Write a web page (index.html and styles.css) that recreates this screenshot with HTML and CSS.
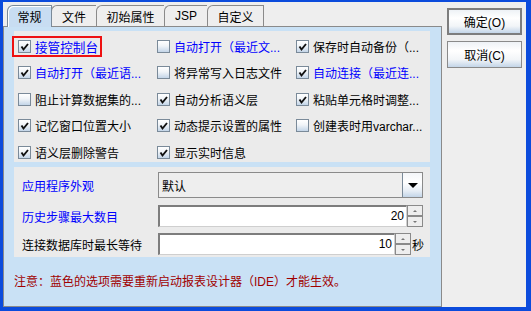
FILE: index.html
```html
<!DOCTYPE html>
<html lang="zh">

<head>
    <meta charset="utf-8">
    <title>选项</title>
    <link rel="stylesheet" href="styles.css">
</head>

<body>
    <div class="window">
        <div class="tabpane">
            <div class="tabs">
                <div class="tab active t1">常规</div>
                <div class="tab t2">文件</div>
                <div class="tab t3">初始属性</div>
                <div class="tab t4">JSP</div>
                <div class="tab t5">自定义</div>
            </div>

            <div class="panel">
                <div class="options">
                    <div class="opt hl"><span class="cb"><svg viewBox="0 0 11 11"><path d="M2.5 5.5 L4.5 8.5 L9 3" /></svg></span><span class="blue big">接管控制台</span></div>
                    <div class="opt"><span class="cb"></span><span class="blue">自动打开（最近文...</span></div>
                    <div class="opt"><span class="cb"><svg viewBox="0 0 11 11"><path d="M2.5 5.5 L4.5 8.5 L9 3" /></svg></span><span>保存时自动备份（...</span></div>

                    <div class="opt"><span class="cb"><svg viewBox="0 0 11 11"><path d="M2.5 5.5 L4.5 8.5 L9 3" /></svg></span><span class="blue">自动打开（最近语...</span></div>
                    <div class="opt"><span class="cb"></span><span>将异常写入日志文件</span></div>
                    <div class="opt"><span class="cb"><svg viewBox="0 0 11 11"><path d="M2.5 5.5 L4.5 8.5 L9 3" /></svg></span><span class="blue">自动连接（最近连...</span></div>

                    <div class="opt"><span class="cb"></span><span>阻止计算数据集的...</span></div>
                    <div class="opt"><span class="cb"><svg viewBox="0 0 11 11"><path d="M2.5 5.5 L4.5 8.5 L9 3" /></svg></span><span>自动分析语义层</span></div>
                    <div class="opt"><span class="cb"><svg viewBox="0 0 11 11"><path d="M2.5 5.5 L4.5 8.5 L9 3" /></svg></span><span>粘贴单元格时调整...</span></div>

                    <div class="opt"><span class="cb"><svg viewBox="0 0 11 11"><path d="M2.5 5.5 L4.5 8.5 L9 3" /></svg></span><span>记忆窗口位置大小</span></div>
                    <div class="opt"><span class="cb"><svg viewBox="0 0 11 11"><path d="M2.5 5.5 L4.5 8.5 L9 3" /></svg></span><span>动态提示设置的属性</span></div>
                    <div class="opt"><span class="cb"></span><span>创建表时用varchar...</span></div>

                    <div class="opt"><span class="cb"><svg viewBox="0 0 11 11"><path d="M2.5 5.5 L4.5 8.5 L9 3" /></svg></span><span>语义层删除警告</span></div>
                    <div class="opt"><span class="cb"><svg viewBox="0 0 11 11"><path d="M2.5 5.5 L4.5 8.5 L9 3" /></svg></span><span>显示实时信息</span></div>
                </div>

                <div class="settings">
                    <div class="row r1">
                        <span class="lbl blue">应用程序外观</span>
                        <div class="combo">
                            <span class="combo_val">默认</span>
                            <span class="combo_btn"><i></i></span>
                        </div>
                    </div>
                    <div class="row r2">
                        <span class="lbl blue">历史步骤最大数目</span>
                        <div class="field">20</div>
                        <div class="spin"><span class="up"><i></i></span><span class="down"><i></i></span></div>
                    </div>
                    <div class="row r3">
                        <span class="lbl">连接数据库时最长等待</span>
                        <div class="field short">10</div>
                        <div class="spin"><span class="up"><i></i></span><span class="down"><i></i></span></div>
                        <span class="unit">秒</span>
                    </div>
                </div>

                <p class="note">注意：蓝色的选项需要重新启动报表设计器（IDE）才能生效。</p>
            </div>
        </div>

        <div class="side">
            <button class="btn default">确定(O)</button>
            <button class="btn">取消(C)</button>
        </div>
    </div>
</body>

</html>
```

FILE: styles.css
```css
body {
    margin: 0;
    font-family: "Liberation Sans", "Noto Sans CJK SC", sans-serif;
    font-size: 12px;
    color: #000;
}

.window {
    box-sizing: border-box;
    width: 531px;
    height: 311px;
    display: flex;
    overflow: hidden;
    background-color: #eeeeee;
    border-style: solid;
    border-color: #0b4bdc;
    border-width: 2px 5px 4px 3px;
}

.tabpane {
    width: 439px;
    display: flex;
    flex-direction: column;
}

/* tabs */

.tabs {
    box-sizing: border-box;
    height: 24px;
    padding-left: 4px;
    display: flex;
    align-items: flex-end;
}

.tab {
    box-sizing: border-box;
    height: 21px;
    border: 1px solid #8a8a8a;
    border-right: none;
    border-bottom: none;
    border-top-left-radius: 6px;
    display: flex;
    align-items: center;
    justify-content: center;
    background-color: #eeeeee;
}

.t1 { width: 45px; }
.t2 { width: 45px; }
.t3 { width: 68px; }
.t4 { width: 43px; }
.t5 { width: 57px; border-right: 1px solid #8a8a8a; }

.tab.active {
    position: relative;
    z-index: 1;
    height: 22px;
    margin-bottom: -1px;
    border-color: #7a8a99;
    border-right: 1px solid #7a8a99;
    margin-right: -1px;
    background-color: #c8ddf2;
    box-shadow: inset 1px 1px 0 #ffffff;
}

/* panel */

.panel {
    flex: 1;
    box-sizing: border-box;
    background-color: #c9e1f5;
    border: 1px solid #8a8a8a;
    padding: 4px 11px 0 10px;
}

.options {
    box-sizing: border-box;
    height: 131px;
    background-color: #ebebeb;
    display: grid;
    grid-template-columns: 139px 139px 1fr;
    grid-auto-rows: 26.5px;
    padding: 2px 0 0 4px;
}

.opt {
    display: flex;
    align-items: center;
    gap: 4px;
    white-space: nowrap;
    overflow: hidden;
}

.hl {
    box-sizing: border-box;
    align-self: center;
    justify-self: start;
    height: 21px;
    margin-left: -6px;
    padding: 0 2px 0 4px;
    border: 2px solid #ee1111;
    overflow: visible;
}

.cb {
    flex: none;
    box-sizing: border-box;
    width: 13px;
    height: 13px;
    border: 1px solid #7a8a99;
    background: linear-gradient(#ffffff, #f0f4f8 45%, #c3d5e8);
    display: flex;
}

.cb svg {
    width: 11px;
    height: 11px;
}

.cb path {
    fill: none;
    stroke: #111;
    stroke-width: 1.9;
}

.blue {
    color: #0000ff;
}

.big {
    font-size: 12.6px;
}

/* settings */

.settings {
    box-sizing: border-box;
    height: 90px;
    margin-top: 5px;
    background-color: #ebebeb;
    padding: 5px 7px 0 8px;
}

.row {
    display: flex;
    align-items: center;
}

.r1 { height: 26px; }
.r2 { height: 22px; margin-top: 7px; }
.r3 { height: 22px; margin-top: 6px; }

.lbl {
    width: 136px;
    flex: none;
    white-space: nowrap;
}

.combo {
    box-sizing: border-box;
    flex: 1;
    height: 26px;
    border: 1px solid #8a8a8a;
    background-color: #eeeeee;
    display: flex;
    align-items: center;
}

.combo_val {
    flex: 1;
    padding-left: 3px;
}

.combo_btn {
    box-sizing: border-box;
    width: 20px;
    height: 100%;
    border-left: 1px solid #7a8a99;
    background: linear-gradient(#f4f6f9, #ffffff 40%, #e6edf5 75%, #c3d5e8);
    display: flex;
    align-items: center;
    justify-content: center;
}

.combo_btn i {
    width: 0;
    height: 0;
    border-left: 5px solid transparent;
    border-right: 5px solid transparent;
    border-top: 5px solid #000;
}

.field {
    box-sizing: border-box;
    flex: 1;
    height: 22px;
    background-color: #ffffff;
    border: 1px solid #cfcfcf;
    border-top: 2px solid #7d7d7d;
    border-left: 2px solid #7d7d7d;
    text-align: right;
    padding-right: 2px;
    line-height: 18px;
}

.field.short {
    flex: none;
    width: 237px;
}

.spin {
    box-sizing: border-box;
    width: 16px;
    height: 22px;
    flex: none;
    display: flex;
    flex-direction: column;
    border: 1px solid #8a8a8a;
    background-color: #eeeeee;
}

.spin span {
    flex: 1;
    display: flex;
    align-items: center;
    justify-content: center;
}

.spin .up {
    border-bottom: 2px solid #8a8a8a;
}

.spin .up i {
    border-left: 2px solid transparent;
    border-right: 2px solid transparent;
    border-bottom: 2px solid #777;
}

.spin .down i {
    border-left: 2px solid transparent;
    border-right: 2px solid transparent;
    border-top: 2px solid #777;
}

.unit {
    padding-left: 1px;
}

.note {
    margin: 17px 0 0 0;
    color: #a00000;
    line-height: 16px;
    white-space: nowrap;
}

/* buttons */

.side {
    flex: 1;
    display: flex;
    flex-direction: column;
    padding: 6px 4px 0 5px;
    gap: 6px;
}

.btn {
    box-sizing: border-box;
    width: 75px;
    height: 27px;
    font-family: "Liberation Sans", "Noto Sans CJK SC", sans-serif;
    font-size: 12px;
    color: #000;
    border: 1px solid #8a8a8a;
    background: linear-gradient(#eef2f6, #ffffff 35%, #f2f5f8 70%, #c3d5e8);
    padding: 0;
}

.btn.default {
    border: 2px solid #7d7d7d;
}
```
